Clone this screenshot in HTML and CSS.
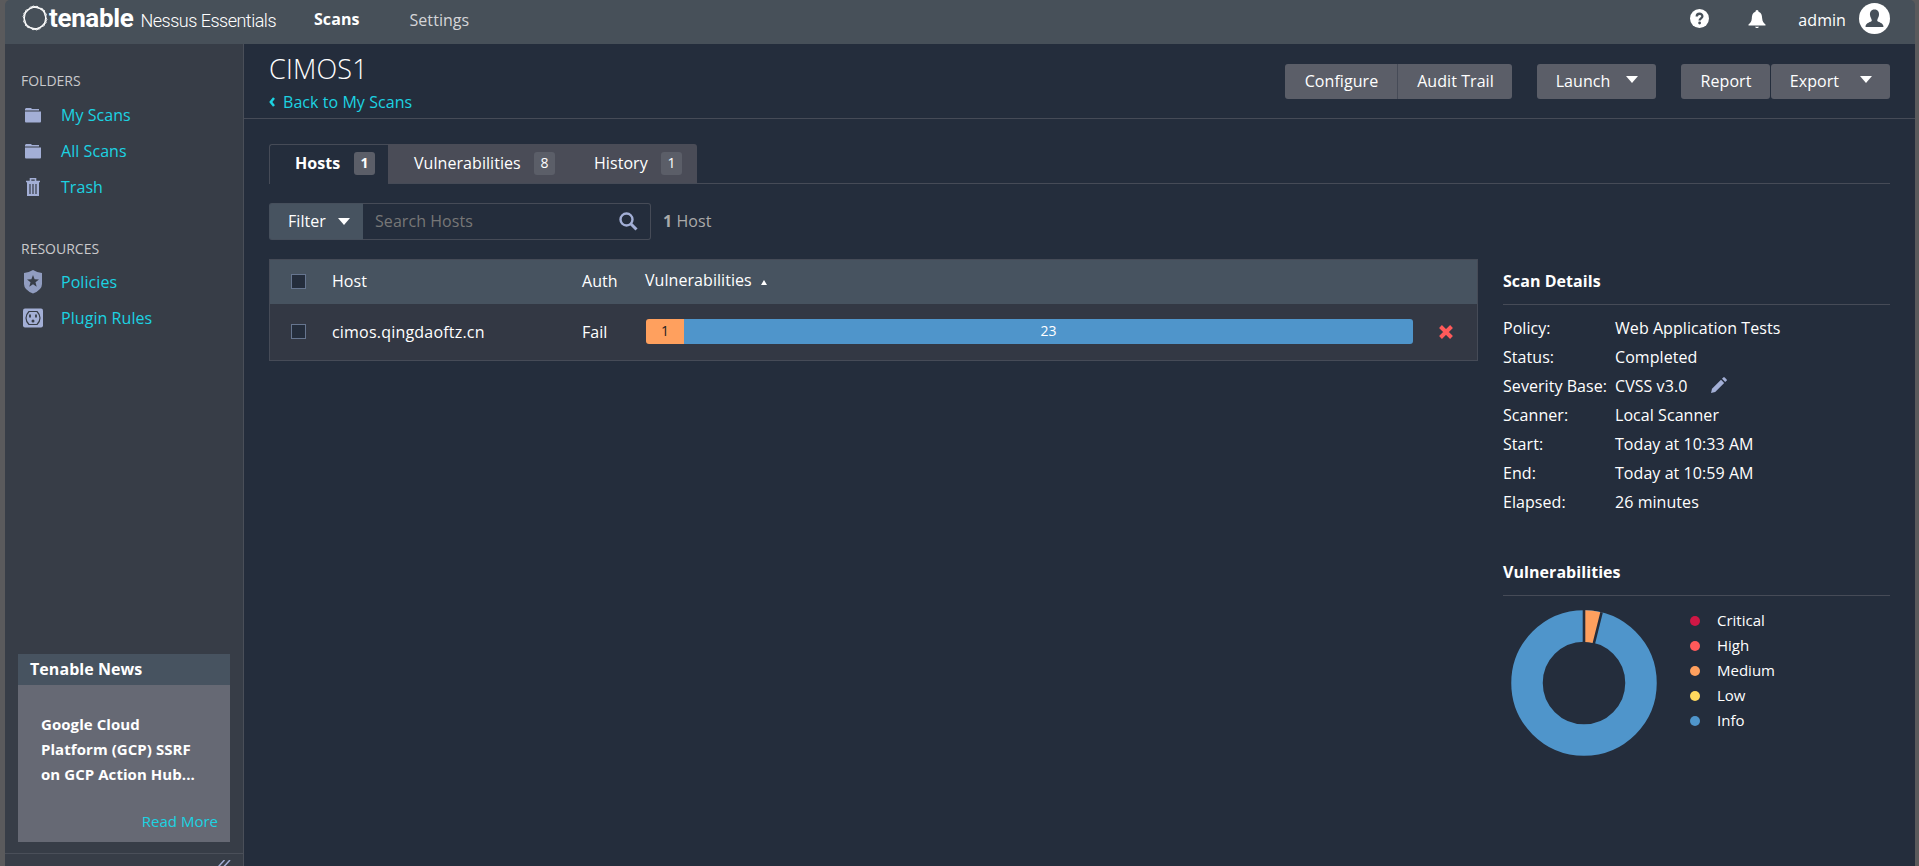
FILE: index.html
```html
<!DOCTYPE html>
<html lang="en">
<head>
    <meta charset="UTF-8">
    <title>Nessus Essentials / Folders / View Scan</title>
    <link rel="stylesheet" href="styles.css">
</head>
<body>
    <div class="app">
        <header class="topbar">
            <div class="logo">
                <svg class="logo-mark" width="26" height="26" viewBox="0 0 26 26" fill="none" stroke="#fff" stroke-width=".9">
                    <path d="M19 2.600L25 13L19 23.400L7 23.400L1 13L7 2.600Z" transform="rotate(8 13 13)"/>
                    <path d="M19 2.600L25 13L19 23.400L7 23.400L1 13L7 2.600Z" transform="rotate(22 13 13)"/>
                    <path d="M19 2.600L25 13L19 23.400L7 23.400L1 13L7 2.600Z" transform="rotate(40 13 13)"/>
                </svg>
                <span class="logo-name">tenable</span>
                <span class="logo-product">Nessus Essentials</span>
            </div>
            <nav class="topnav">
                <a class="topnav-link active">Scans</a>
                <a class="topnav-link">Settings</a>
            </nav>
            <div class="user">
                <svg class="help" width="19" height="19" viewBox="0 0 19 19">
                    <circle cx="9.500" cy="9.500" r="9.500" fill="#fff"/>
                    <path d="M6.700 7.400C6.700 3.900 12.400 3.900 12.400 7.200C12.400 9.300 9.600 9.300 9.600 11.600" fill="none" stroke="#475059" stroke-width="2.300"/>
                    <circle cx="9.600" cy="14" r="1.400" fill="#475059"/>
                </svg>
                <svg class="bell" width="18" height="18" viewBox="0 0 18 18" fill="#fff">
                    <path d="M9 0C10 0 10.500 .8 10.500 1.700C13.500 2.600 14 5.500 14.200 8.500C14.400 11.500 15.500 13 17.500 14.500V15.500H.5V14.500C2.500 13 3.600 11.500 3.800 8.500C4 5.500 4.500 2.600 7.500 1.700C7.500 .8 8 0 9 0Z"/>
                    <path d="M7 16.700H11L10 18H8Z"/>
                </svg>
                <span class="user-name">admin</span>
                <svg class="avatar" width="31" height="31" viewBox="0 0 31 31">
                    <circle cx="15.500" cy="15.500" r="15.500" fill="#fff"/>
                    <path d="M15.500 6.500C19 6.500 20.300 9 20 12C19.800 14 18.500 15.500 18.200 17.500C18.500 19.500 24.500 19 24.500 24H6.500C6.500 19 12.500 19.500 12.800 17.500C12.500 15.500 11.200 14 11 12C10.700 9 12 6.500 15.500 6.500Z" fill="#475059"/>
                </svg>
            </div>
        </header>
        <div class="body">
            <aside class="sidebar">
                <h4 class="side-title">FOLDERS</h4>
                <a class="side-link">
                    <svg width="20" height="20" viewBox="0 0 20 20" fill="#a3afd6"><path d="M3 3H8L9 4H16V5.500H2V4Z"/><path d="M2 6.500H18V16.500Q18 17.500 17 17.500H3Q2 17.500 2 16.500Z"/></svg>
                    My Scans
                </a>
                <a class="side-link">
                    <svg width="20" height="20" viewBox="0 0 20 20" fill="#a3afd6"><path d="M3 3H8L9 4H16V5.500H2V4Z"/><path d="M2 6.500H18V16.500Q18 17.500 17 17.500H3Q2 17.500 2 16.500Z"/></svg>
                    All Scans
                </a>
                <a class="side-link">
                    <svg width="20" height="20" viewBox="0 0 20 20"><path d="M7.500 4V1.700H12.500V4M3 4.500H17" fill="none" stroke="#a3afd6" stroke-width="1.600"/><path d="M4 5H16V19H4Z" fill="#a3afd6"/><path d="M7 7V17M10 7V17M13 7V17" stroke="#373d47" stroke-width="1.200"/></svg>
                    Trash
                </a>
                <h4 class="side-title resources">RESOURCES</h4>
                <a class="side-link">
                    <svg width="20" height="24" viewBox="0 0 20 24"><path d="M10 0Q14 2.500 19 3V14Q19 20 10 23.500Q1 20 1 14V3Q6 2.500 10 0Z" fill="#919dc0"/><path d="M10 5L11.600 9.300L16 9.500L12.500 12.300L13.700 16.700L10 14.200L6.300 16.700L7.500 12.300L4 9.500L8.400 9.300Z" fill="#373d47"/></svg>
                    Policies
                </a>
                <a class="side-link">
                    <svg width="20" height="20" viewBox="0 0 20 20"><rect width="20" height="19" y=".5" rx="2" fill="#a3afd6"/><path d="M6 3.500H14Q17 6.500 17 10T14 16.500H6Q3 13.500 3 10T6 3.500Z" fill="none" stroke="#373d47" stroke-width="1.200"/><path d="M7 6.500V9.500M13 6.500V9.500" stroke="#373d47" stroke-width="1.800"/><circle cx="10" cy="13" r="1.500" fill="#373d47"/></svg>
                    Plugin Rules
                </a>
                <section class="news">
                    <h5 class="news-head">Tenable News</h5>
                    <div class="news-body">
                        <p class="news-text">Google Cloud<br>Platform (GCP) SSRF<br>on GCP Action Hub...</p>
                        <a class="news-more">Read More</a>
                    </div>
                </section>
                <div class="collapse">
                    <svg width="13" height="12" viewBox="0 0 13 12" fill="none" stroke="#a3afd6" stroke-width="1.500"><path d="M6.500 0L1 6L6.500 12M12 0L6.500 6L12 12"/></svg>
                </div>
            </aside>
            <main class="main">
                <div class="page-head">
                    <div class="page-title">
                        <h1>CIMOS1</h1>
                        <a class="back"><svg width="6" height="10" viewBox="0 0 6 10" fill="none" stroke="#1cd3e2" stroke-width="2.500"><path d="M5 1L1.800 5L5 9"/></svg>Back to My Scans</a>
                    </div>
                    <div class="actions">
                        <div class="btn-group">
                            <button class="btn configure">Configure</button>
                            <button class="btn audit">Audit Trail</button>
                        </div>
                        <button class="btn launch">Launch <i class="caret"></i></button>
                        <div class="btn-pair">
                            <button class="btn report">Report</button>
                            <button class="btn export">Export <i class="caret"></i></button>
                        </div>
                    </div>
                </div>
                <div class="content">
                    <div class="tabs">
                        <a class="tab active">Hosts <span class="count">1</span></a>
                        <a class="tab vulns">Vulnerabilities <span class="count">8</span></a>
                        <a class="tab history">History <span class="count">1</span></a>
                    </div>
                    <div class="filters">
                        <div class="filter-btn">Filter <i class="caret"></i></div>
                        <div class="search">
                            <span>Search Hosts</span>
                            <svg width="19" height="19" viewBox="0 0 19 19" fill="none" stroke="#a3afd6"><circle cx="7.500" cy="7.500" r="6" stroke-width="2.400"/><path d="M12 12L17.500 17.500" stroke-width="3"/></svg>
                        </div>
                        <span class="total"><b>1</b> Host</span>
                    </div>
                    <div class="columns">
                        <div class="table">
                            <div class="row head">
                                <span class="check"></span>
                                <span>Host</span>
                                <span>Auth</span>
                                <span class="sorted">Vulnerabilities <i class="sort"></i></span>
                            </div>
                            <div class="row">
                                <span class="check"></span>
                                <span class="host-name">cimos.qingdaoftz.cn</span>
                                <span>Fail</span>
                                <div class="bar">
                                    <span class="bar-medium" style="width: 38px">1</span>
                                    <span class="bar-info">23</span>
                                </div>
                                <svg class="remove" width="14" height="14" viewBox="0 0 14 14" stroke="#ff5a5a" stroke-width="4"><path d="M1.500 1.500L12.500 12.500M12.500 1.500L1.500 12.500"/></svg>
                            </div>
                        </div>
                        <div class="info">
                            <h3 class="info-title">Scan Details</h3>
                            <dl class="details">
                                <dt>Policy:</dt><dd>Web Application Tests</dd>
                                <dt>Status:</dt><dd>Completed</dd>
                                <dt>Severity Base:</dt><dd>CVSS v3.0 <svg class="pencil" width="16" height="16" viewBox="0 0 16 16" fill="#a3afd6"><path d="M0 16L1 11.800L10 2.800L13.200 6L4.200 15Z"/><path d="M11 1.800L12.500 .3Q13 0 13.500 .3L15.700 2.500Q16 3 15.700 3.500L14.200 5Z"/></svg></dd>
                                <dt>Scanner:</dt><dd>Local Scanner</dd>
                                <dt>Start:</dt><dd>Today at 10:33 AM</dd>
                                <dt>End:</dt><dd>Today at 10:59 AM</dd>
                                <dt>Elapsed:</dt><dd>26 minutes</dd>
                            </dl>
                            <h3 class="info-title">Vulnerabilities</h3>
                            <div class="chart">
                                <svg class="donut" width="146" height="146" viewBox="0 0 146 146">
                                    <circle cx="73" cy="73" r="57" fill="none" stroke="#4f95cb" stroke-width="31.500"/>
                                    <path d="M73 .3A72.700 72.700 0 0 1 90.600 2.400L82.900 33.200A41 41 0 0 0 73 32Z" fill="#ffa05e"/>
                                    <path d="M73 0V33M90.600 2.200L82.700 34" stroke="#242d3c" stroke-width="2.600"/>
                                </svg>
                                <ul class="legend">
                                    <li class="critical">Critical</li>
                                    <li class="high">High</li>
                                    <li class="medium">Medium</li>
                                    <li class="low">Low</li>
                                    <li class="info-level">Info</li>
                                </ul>
                            </div>
                        </div>
                    </div>
                </div>
            </main>
        </div>
    </div>
</body>
</html>
```
FILE: styles.css
```css
* {
    box-sizing: border-box;
}

body {
    margin: 0;
    height: 866px;
    overflow: hidden;
    background-color: #5a5a5c;
    font-family: "Open Sans", "Noto Sans", sans-serif;
    font-size: 16px;
    line-height: 22px;
    letter-spacing: 0.060px;
    color: #fff;
}

h1, h3, h4, h5, p, dl, dd, ul {
    margin: 0;
    padding: 0;
}

.app {
    height: 866px;
    margin: 0 4px 0 5px;
    display: flex;
    flex-direction: column;
}

/* top bar */
.topbar {
    display: flex;
    height: 44px;
    background-color: #475059;
    border-radius: 5px 5px 0 0;
}

.logo {
    display: flex;
    width: 309px;
    padding: 5px 0 0 17px;
}

.logo-name {
    margin: -1px 0 0 1px;
    font: bold 26px/28px Roboto, sans-serif;
    letter-spacing: -0.350px;
}

.logo-product {
    margin: 3px 0 0 7px;
    font: 300 18px/26px Roboto, sans-serif;
    letter-spacing: -0.500px;
}

.topnav {
    display: flex;
    gap: 50px;
    padding-top: 8px;
}

.topnav-link {
    padding-top: 1px;
    color: #d5d5d8;
}

.topnav-link.active {
    padding-top: 0;
    font-weight: bold;
    color: #fff;
}

.user {
    display: flex;
    margin-left: auto;
    padding-right: 25px;
}

.help {
    margin: 9px 39px 0 0;
}

.bell {
    margin: 10px 32px 0 0;
}

.user-name {
    padding-top: 9px;
}

.avatar {
    margin: 3px 0 0 13px;
}

.body {
    display: flex;
    flex: 1;
}

/* sidebar */
.sidebar {
    display: flex;
    flex-direction: column;
    width: 239px;
    background-color: #373d47;
    border-right: 1px solid #4a4f59;
}

.side-title {
    height: 22px;
    margin: 26px 0 5px 16px;
    font-size: 14px;
    font-weight: normal;
    letter-spacing: 0;
    color: #c9c9cc;
}

.side-title.resources {
    margin: 33px 0 4px 16px;
}

.side-link {
    display: flex;
    align-items: center;
    gap: 18px;
    height: 36px;
    padding-left: 18px;
    color: #1cd3e2;
}

.news {
    width: 212px;
    height: 188px;
    margin: auto 0 11px 13px;
    background-color: #666974;
}

.news-head {
    height: 31px;
    padding-left: 12px;
    background-color: #475360;
    font-size: 16px;
    line-height: 31px;
}

.news-body {
    padding: 27px 12px 0 23px;
}

.news-text {
    font-size: 15px;
    font-weight: bold;
    line-height: 25px;
}

.news-more {
    display: block;
    margin-top: 22px;
    font-size: 15px;
    line-height: 25px;
    letter-spacing: 0;
    text-align: right;
    color: #1cd3e2;
}

.collapse {
    height: 13px;
    padding: 6px 12px 0 0;
    border-top: 1px solid #4a4f59;
    overflow: hidden;
    text-align: right;
    line-height: 0;
}

/* main area */
.main {
    flex: 1;
    background-color: #242d3c;
}

.page-head {
    display: flex;
    justify-content: space-between;
    height: 75px;
    padding: 0 25px;
    border-bottom: 1px solid #464b57;
}

h1 {
    padding-top: 9px;
    font: 300 27px/32px "Open Sans", sans-serif;
    letter-spacing: 0.200px;
}

.back {
    display: flex;
    align-items: center;
    gap: 8px;
    margin-top: 6px;
    color: #1cd3e2;
}

.actions {
    display: flex;
    padding-top: 20px;
}

.btn-group, .btn-pair {
    display: flex;
}

.btn-group {
    margin-right: 25px;
}

.btn {
    display: flex;
    align-items: center;
    justify-content: center;
    height: 35px;
    padding: 0 0 2px 1px;
    border: none;
    border-radius: 3px;
    background-color: #5b5e68;
    font: inherit;
    letter-spacing: 0.060px;
    color: #fff;
}

.configure {
    width: 113px;
    border-right: 1px solid #464b57;
    border-radius: 3px 0 0 3px;
}

.audit {
    width: 114px;
    border-radius: 0 3px 3px 0;
}

.launch {
    width: 119px;
    margin-right: 25px;
    gap: 16px;
}

.btn-pair {
    gap: 1px;
}

.report {
    width: 89px;
}

.export {
    width: 119px;
    gap: 21px;
}

.caret {
    border: 6px solid transparent;
    border-top: 7px solid #fff;
    border-bottom: none;
}

.btn .caret {
    margin-bottom: 2px;
}

.content {
    padding: 25px 25px 0;
}

.tabs {
    display: flex;
    height: 40px;
    border-bottom: 1px solid #464b57;
}

.tab {
    display: flex;
    align-items: center;
    justify-content: space-between;
    height: 39px;
    padding-bottom: 1px;
    background-color: #4a4c57;
}

.tab.active {
    width: 119px;
    height: 40px;
    padding: 0 13px 3px 25px;
    border: 1px solid #464b57;
    border-bottom: none;
    border-right: none;
    border-radius: 3px 0 0 0;
    background-color: #242d3c;
    font-weight: bold;
}

.vulns {
    width: 167px;
    padding-left: 26px;
}

.history {
    width: 142px;
    padding-left: 39px;
    padding-right: 15px;
    border-radius: 0 3px 0 0;
}

.count {
    width: 21px;
    height: 23px;
    border-radius: 3px;
    background-color: #5b5e68;
    font-size: 14px;
    text-align: center;
}

.filters {
    display: flex;
    height: 37px;
    margin-top: 19px;
}

.filter-btn {
    display: flex;
    align-items: center;
    gap: 12px;
    width: 94px;
    padding: 0 0 1px 18px;
    border: 1px solid #464f5c;
    border-right: none;
    border-radius: 3px 0 0 3px;
    background-color: #475360;
}

.search {
    display: flex;
    align-items: center;
    justify-content: space-between;
    width: 288px;
    padding: 0 12px 1px 12px;
    border: 1px solid #464b57;
    border-left: none;
    border-radius: 0 3px 3px 0;
    color: #777;
}

.total {
    margin: 7px 0 0 12px;
    color: #aaa;
}

.columns {
    display: flex;
    gap: 25px;
    margin-top: 19px;
}

.table {
    width: 1209px;
    height: 102px;
    border: 1px solid #464b57;
}

.row {
    display: grid;
    grid-template-columns: 62px 250px 64px 767px 1fr;
    align-items: center;
    height: 56px;
    padding-bottom: 1px;
    background-color: #333844;
}

.row.head {
    height: 44px;
    padding-bottom: 2px;
    background-color: #475360;
}

.host-name {
    letter-spacing: 0.200px;
}

.check {
    width: 15px;
    height: 15px;
    margin-left: 21px;
    border: 1px solid #66758f;
    background-color: #242d3c;
}

.sorted {
    padding-bottom: 2px;
    margin-left: -1px;
}

.sort {
    display: inline-block;
    margin: 0 0 1px 5px;
    border: 3px solid transparent;
    border-bottom: 5px solid #fff;
    border-top: none;
}

.bar {
    display: flex;
    height: 25px;
    border-radius: 3px;
    overflow: hidden;
    font-size: 14px;
    line-height: 24px;
    text-align: center;
}

.bar-medium {
    background-color: #ffa05e;
    color: #222;
}

.bar-info {
    flex: 1;
    background-color: #4f95cb;
}

.remove {
    margin-left: 26px;
}

/* right column */
.info {
    width: 387px;
    padding-top: 11px;
}

.info-title {
    height: 35px;
    border-bottom: 1px solid #464b57;
    font-size: 16px;
    line-height: 22px;
}

.details {
    display: grid;
    grid-template-columns: 112px 1fr;
    grid-auto-rows: 29px;
    height: 256px;
    padding-top: 12px;
    white-space: nowrap;
}

.pencil {
    margin: 0 0 -1px 19px;
}

.chart {
    display: flex;
    padding: 14px 0 0 8px;
}

.legend {
    margin: -2px 0 0 33px;
    list-style: none;
    font-size: 15px;
    line-height: 25px;
    letter-spacing: 0;
}

.legend li {
    display: flex;
    align-items: center;
    gap: 17px;
}

.legend li::before {
    content: "";
    width: 10px;
    height: 10px;
    border-radius: 50%;
}

.critical::before {
    background-color: #cf1745;
}

.high::before {
    background-color: #ff5a5a;
}

.medium::before {
    background-color: #ffa05e;
}

.low::before {
    background-color: #ffd95e;
}

.info-level::before {
    background-color: #4f95cb;
}
```
